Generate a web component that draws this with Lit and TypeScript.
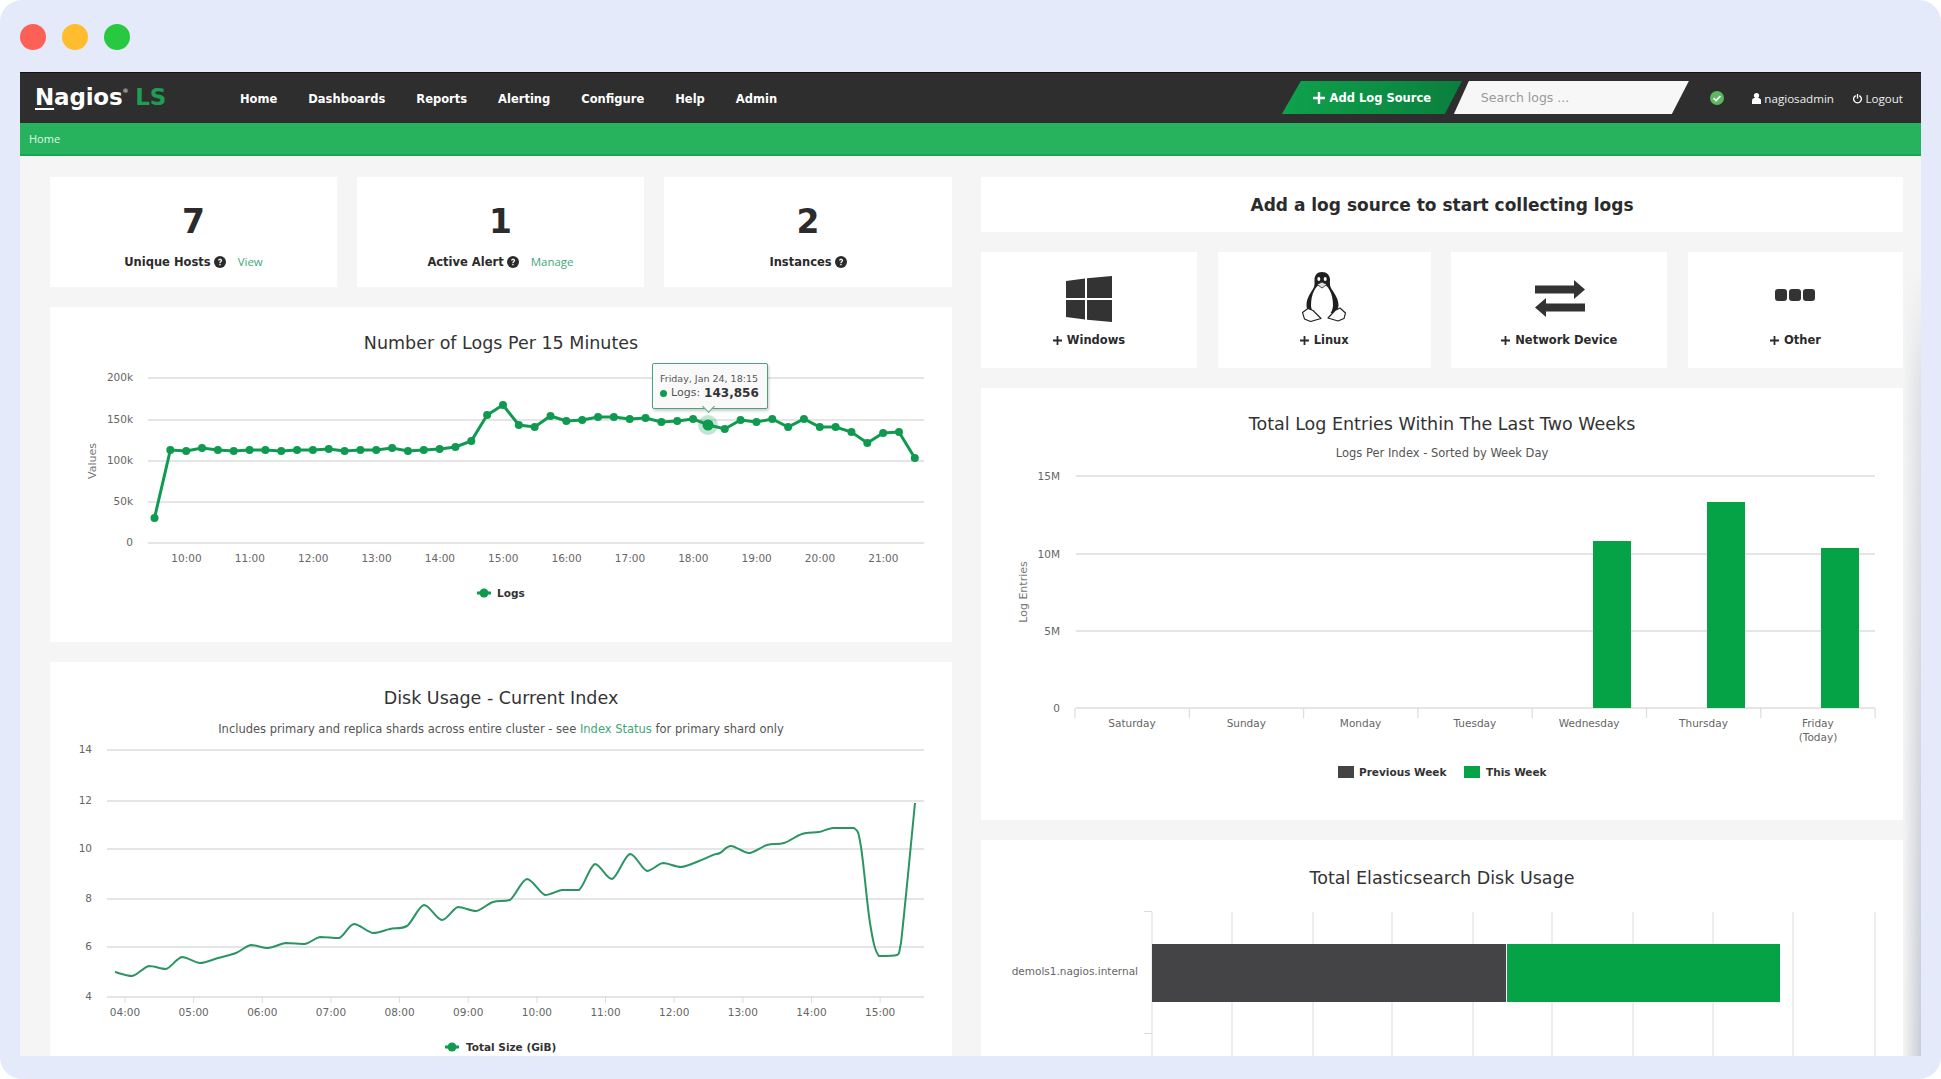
import { LitElement, html, css, svg } from "lit";
import { customElement } from "lit/decorators.js";

const GREEN = "#0f9a50";
const GRID = "#dcdcdc";

// y positions of the logs series, read off the reference at 15 minute steps from 09:30
const LOG_SERIES = [
  518, 450, 451, 448, 450, 451, 450, 450, 451, 450, 450, 449, 451, 450, 450, 448, 451, 450, 449, 447,
  441, 415, 405, 425, 427, 416, 421, 420, 417, 417, 419, 418, 422, 421, 419, 425, 429, 420, 422, 419,
  427, 419, 427, 427, 432, 443, 433, 432, 458,
];

// disk usage trace as [x, y] pairs in page pixels
const DISK_SERIES = [
  [115, 972], [132, 976], [149, 966], [166, 969], [182, 957], [200, 963], [218, 958], [236, 953],
  [251, 945], [268, 948], [286, 943], [305, 944], [320, 937], [339, 938], [354, 924], [373, 933],
  [390, 929], [407, 926], [424, 905], [442, 920], [458, 907], [476, 911], [493, 902], [510, 900],
  [527, 879], [545, 895], [562, 890], [579, 890], [595, 864], [612, 879], [630, 854], [647, 871],
  [663, 863], [681, 867], [699, 861], [713, 855], [720, 853], [731, 846], [749, 853], [767, 845],
  [784, 843], [802, 834], [819, 832], [833, 828], [854, 828], [861, 847], [870, 923], [879, 956],
  [897, 955], [901, 943], [915, 803],
];

function clamp(v: number, a: number, b: number) {
  return Math.min(Math.max(v, Math.min(a, b)), Math.max(a, b));
}

function smooth(points: number[][]) {
  let d = `M${points[0][0]} ${points[0][1]}`;
  for (let i = 0; i < points.length - 1; i++) {
    const p0 = points[Math.max(i - 1, 0)];
    const p1 = points[i];
    const p2 = points[i + 1];
    const p3 = points[Math.min(i + 2, points.length - 1)];
    const t = 0.16;
    const c1y = clamp(p1[1] + (p2[1] - p0[1]) * t, p1[1], p2[1]);
    const c2y = clamp(p2[1] - (p3[1] - p1[1]) * t, p1[1], p2[1]);
    d += ` C${p1[0] + (p2[0] - p0[0]) * t} ${c1y} ${p2[0] - (p3[0] - p1[0]) * t} ${c2y} ${p2[0]} ${p2[1]}`;
  }
  return d;
}

const questionIcon = html`<svg class="q" viewBox="0 0 12 12"><circle cx="6" cy="6" r="6" fill="#2b2b2b"/><path d="M4 4.6C4 3.4 5 2.8 6 2.8s2.1.6 2.1 1.8c0 1.5-1.6 1.4-1.6 2.6H5.3c0-1.7 1.5-1.7 1.5-2.6 0-.4-.3-.7-.8-.7s-.8.3-.8.7zM5.3 8h1.3v1.3H5.3z" fill="#fff"/></svg>`;

const plusIcon = html`<svg class="plus" viewBox="0 0 10 10"><path d="M4 0h2v4h4v2H6v4H4V6H0V4h4z" fill="currentColor"/></svg>`;

@customElement("app-root")
export class AppRoot extends LitElement {
  static styles = css`
    :host {
      display: block;
      width: 1941px;
      height: 1079px;
      background: #fff;
      font-family: "DejaVu Sans", sans-serif;
      color: #2b2b2b;
    }
    .frame {
      position: relative;
      height: 1079px;
      box-sizing: border-box;
      background: #e5eafb;
      border-radius: 22px;
      padding: 24px 20px;
    }
    .lights {
      display: flex;
      gap: 16px;
      height: 48px;
    }
    .lights i {
      width: 26px;
      height: 26px;
      border-radius: 50%;
    }
    .window {
      height: 984px;
      overflow: hidden;
      background: #f5f5f5;
    }
    .topbar {
      height: 51px;
      box-sizing: border-box;
      background: #2e2e2e;
      border-top: 1px solid #111;
      display: flex;
      align-items: center;
      padding: 0 18px 0 15px;
      color: #fff;
    }
    .logo {
      font-size: 23px;
      font-weight: 700;
      width: 205px;
      letter-spacing: -0.2px;
      margin-top: -2px;
    }
    .logo u {
      text-underline-offset: 3px;
    }
    .logo sup {
      font-size: 6px;
      font-weight: 400;
      vertical-align: 12px;
    }
    .logo span {
      color: #1f9d55;
      margin-left: 7px;
    }
    .nav {
      display: flex;
      gap: 31px;
      font-size: 11.5px;
      font-weight: 700;
      flex: 1;
      margin-top: 2px;
    }
    .add {
      width: 180px;
      height: 33px;
      display: flex;
      align-items: center;
      justify-content: center;
      gap: 5px;
      font-size: 11.5px;
      font-weight: 700;
      background: linear-gradient(to right, #0fa24c, #0a7f3e);
      clip-path: polygon(19px 0, 100% 0, 163px 100%, 0 100%);
      margin-top: -1px;
    }
    .add .plus {
      width: 12px;
      height: 12px;
    }
    .search {
      width: 235px;
      height: 33px;
      margin-left: -8px;
      box-sizing: border-box;
      padding-left: 27px;
      display: flex;
      align-items: center;
      background: #f7f7f7;
      color: #9a9a9a;
      font-size: 12.5px;
      clip-path: polygon(15px 0, 100% 0, 218px 100%, 0 100%);
      margin-top: -1px;
    }
    .status {
      margin-left: 21px;
      width: 14px;
      height: 14px;
    }
    .user {
      display: flex;
      align-items: center;
      gap: 3px;
      font-size: 11.6px;
      font-family: "Open Sans", sans-serif;
      color: #eee;
    }
    .user svg {
      width: 9px;
      height: 11px;
    }
    .user.name {
      margin-left: 28.5px;
    }
    .user.out {
      margin-left: 19.5px;
    }
    .crumb {
      height: 33px;
      box-sizing: border-box;
      background: #27b35d;
      border-bottom: 2px solid #1aa552;
      color: #e3f7ea;
      font-size: 11px;
      font-family: "Open Sans", sans-serif;
      display: flex;
      align-items: center;
      padding-left: 9px;
    }
    .content {
      display: grid;
      grid-template-columns: 902px 922px;
      column-gap: 29px;
      padding: 21px 18px 0 30px;
      align-items: start;
    }
    .col {
      display: flex;
      flex-direction: column;
    }
    .card {
      background: #fff;
      position: relative;
    }
    .stats {
      display: grid;
      grid-template-columns: 287px 287px 288px;
      column-gap: 20px;
      margin-bottom: 20px;
    }
    .stat {
      height: 110px;
      box-sizing: border-box;
      padding-top: 25px;
      text-align: center;
    }
    .stat b {
      display: block;
      font-size: 33px;
      line-height: 40px;
    }
    .stat .label {
      margin-top: 12px;
      font-size: 11.5px;
      font-weight: 700;
      line-height: 16px;
      display: flex;
      justify-content: center;
      align-items: center;
      gap: 3px;
    }
    .q {
      width: 12px;
      height: 12px;
    }
    .label a,
    .sub a {
      color: #3fa777;
      font-weight: 400;
      text-decoration: none;
    }
    .label a {
      margin-left: 9px;
      font-size: 11.5px;
      font-family: "Open Sans", sans-serif;
    }
    .chart {
      padding-top: 24px;
    }
    .chart h3 {
      margin: 0;
      font-size: 17.5px;
      font-weight: 400;
      line-height: 24px;
      text-align: center;
      color: #333;
    }
    .sub {
      text-align: center;
      font-size: 11.5px;
      line-height: 18px;
      color: #555;
    }
    .chart svg {
      display: block;
    }
    svg text {
      font-size: 10.5px;
      fill: #666;
    }
    svg text.ytitle {
      font-size: 11px;
      fill: #777;
    }
    svg text.legend {
      font-weight: 700;
      fill: #333;
    }
    .tooltip {
      position: absolute;
      left: 602px;
      top: 56px;
      width: 116px;
      height: 46px;
      box-sizing: border-box;
      background: #f9f9f9;
      border: 1.5px solid #4f9f7a;
      border-radius: 2px;
      box-shadow: 1px 2px 3px rgba(0, 0, 0, 0.2);
      padding: 8px 0 0 7px;
      font-size: 9.5px;
      line-height: 14px;
      color: #555;
    }
    .tooltip::after {
      content: "";
      position: absolute;
      left: 51px;
      top: 38px;
      width: 8px;
      height: 8px;
      background: #f9f9f9;
      border-right: 1.5px solid #4f9f7a;
      border-bottom: 1.5px solid #4f9f7a;
      transform: rotate(45deg);
    }
    .tooltip .row {
      display: flex;
      align-items: center;
      gap: 4px;
      font-size: 11px;
    }
    .tooltip .row i {
      width: 7px;
      height: 7px;
      border-radius: 50%;
      background: #0f9a50;
    }
    .tooltip .row b {
      font-size: 12px;
      color: #333;
    }
    .headline {
      height: 55px;
      margin-bottom: 20px;
      display: flex;
      align-items: center;
      justify-content: center;
      font-size: 17px;
      font-weight: 700;
    }
    .tiles {
      display: grid;
      grid-template-columns: 216px 213px 216px 215px;
      justify-content: space-between;
      margin-bottom: 20px;
    }
    .tile {
      height: 116px;
      box-sizing: border-box;
      display: flex;
      flex-direction: column;
      align-items: center;
    }
    .tile .ico {
      height: 93px;
      display: flex;
      align-items: center;
      justify-content: center;
    }
    .tile .name {
      display: flex;
      align-items: center;
      gap: 5px;
      font-size: 11.5px;
      font-weight: 700;
      line-height: 20px;
      margin-top: -15px;
    }
    .plus {
      width: 9px;
      height: 9px;
    }
    .gap {
      height: 20px;
      flex: none;
    }
    .sidefade {
      position: absolute;
      right: 20px;
      top: 270px;
      width: 18px;
      height: 786px;
      background: linear-gradient(to right, rgba(200, 205, 215, 0), rgba(190, 195, 208, 0.8));
      -webkit-mask-image: linear-gradient(to bottom, transparent, rgba(0, 0, 0, 0.5) 120px, #000);
      mask-image: linear-gradient(to bottom, transparent, rgba(0, 0, 0, 0.5) 120px, #000);
      pointer-events: none;
    }
  `;

  render() {
    return html`
      <div class="frame">
        <div class="lights">
          <i style="background:#fe5f57"></i>
          <i style="background:#febc2e"></i>
          <i style="background:#28c840"></i>
        </div>
        <div class="window">
          ${this.renderTopbar()}
          <div class="crumb">Home</div>
          <div class="content">
            <div class="col">
              ${this.renderStats()}
              <div class="card chart" style="height:335px;box-sizing:border-box">
                <h3>Number of Logs Per 15 Minutes</h3>
                ${this.renderLogsChart()}
                <div class="tooltip">
                  Friday, Jan 24, 18:15
                  <div class="row"><i></i>Logs: <b>143,856</b></div>
                </div>
              </div>
              <div class="gap"></div>
              <div class="card chart">
                <h3>Disk Usage - Current Index</h3>
                <div class="sub" style="margin-top:10px">
                  Includes primary and replica shards across entire cluster - see
                  <a>Index Status</a> for primary shard only
                </div>
                ${this.renderDiskChart()}
              </div>
            </div>
            <div class="col">
              <div class="card headline">Add a log source to start collecting logs</div>
              ${this.renderTiles()}
              <div class="card chart" style="height:432px;box-sizing:border-box">
                <h3>Total Log Entries Within The Last Two Weeks</h3>
                <div class="sub" style="margin-top:8px">Logs Per Index - Sorted by Week Day</div>
                ${this.renderWeekChart()}
              </div>
              <div class="gap"></div>
              <div class="card chart" style="padding-top:26px">
                <h3>Total Elasticsearch Disk Usage</h3>
                ${this.renderHostChart()}
              </div>
            </div>
          </div>
        </div>
        <div class="sidefade"></div>
      </div>
    `;
  }

  renderTopbar() {
    return html`
      <div class="topbar">
        <div class="logo"><u>N</u>agios<sup>®</sup><span>LS</span></div>
        <div class="nav">
          ${["Home", "Dashboards", "Reports", "Alerting", "Configure", "Help", "Admin"].map(
            (n) => html`<span>${n}</span>`
          )}
        </div>
        <div class="add">${plusIcon}Add Log Source</div>
        <div class="search">Search logs ...</div>
        <svg class="status" viewBox="0 0 14 14">
          <circle cx="7" cy="7" r="7" fill="#5cb85c" />
          <path d="M3.6 7.2l2.4 2.4 4.4-4.6" fill="none" stroke="#fff" stroke-width="1.8" />
        </svg>
        <div class="user name">
          <svg viewBox="0 0 9 11"><circle cx="4.5" cy="2.6" r="2.6" fill="#fff" /><path d="M0 11V7.5C0 6 1.2 5 2.6 5h3.8C7.8 5 9 6 9 7.500V11z" fill="#fff" /></svg>
          nagiosadmin
        </div>
        <div class="user out">
          <svg viewBox="0 0 10 11"><path d="M3 2.2a4.3 4.3 0 1 0 4 0M5 .5v5" fill="none" stroke="#fff" stroke-width="1.5" /></svg>
          Logout
        </div>
      </div>
    `;
  }

  renderStats() {
    return html`
      <div class="stats">
        <div class="card stat">
          <b>7</b>
          <div class="label">Unique Hosts ${questionIcon}<a>View</a></div>
        </div>
        <div class="card stat">
          <b>1</b>
          <div class="label">Active Alert ${questionIcon}<a>Manage</a></div>
        </div>
        <div class="card stat">
          <b>2</b>
          <div class="label">Instances ${questionIcon}</div>
        </div>
      </div>
    `;
  }

  renderTiles() {
    return html`
      <div class="tiles">
        <div class="card tile">
          <div class="ico">
            <svg width="46" height="46" viewBox="0 0 46 46">
              <path d="M0 5l19-2.500V22H0zM21 2.200L46 0v22H21zM0 24h19v19.500L0 41zM21 24h25v22l-25-2.200z" fill="#333" />
            </svg>
          </div>
          <div class="name">${plusIcon}Windows</div>
        </div>
        <div class="card tile">
          <div class="ico">
            <svg width="44" height="50" viewBox="0 0 44 50" style="margin-top:-4px">
              <path d="M20 0c-5 0-7.500 3.500-7.500 8 0 3 .5 5-1 8C9 20.500 4.500 26 4.500 33c0 3 1 6 3 8h25c2.500-2 4-5 4-8 0-7-5-12.500-7.500-17-1.500-3-1-5-1-8 0-4.500-3-8-8-8z" fill="#1f1f1f" />
              <path d="M20 12c-6 0-11 10-11 21 0 7 5 13 11 13s11-6 11-13c0-11-5-21-11-21z" fill="#fff" />
              <ellipse cx="16.800" cy="7" rx="1.500" ry="2" fill="#fff" />
              <ellipse cx="23.200" cy="7" rx="1.500" ry="2" fill="#fff" />
              <path d="M15 12.500l5-2.500 5 2.500-5 3.500z" fill="#ddd" stroke="#1f1f1f" stroke-width=".8" />
              <path d="M.5 40.500l5.500-4 5 2 8 8-10.500 3-6-2.500zM43.500 41l-5.500-5-5 2.500-7 7.500 10 3 6-2.500z" fill="#fff" stroke="#1f1f1f" stroke-width="1.100" stroke-linejoin="round" />
            </svg>
          </div>
          <div class="name">${plusIcon}Linux</div>
        </div>
        <div class="card tile">
          <div class="ico">
            <svg width="50" height="37" viewBox="0 0 50 37" style="margin-left:1px">
              <path d="M0 5.500h39V0l11 9.500L39 19v-5.500H0z" fill="#333" />
              <path d="M50 23.500H11V18L0 27.500 11 37v-5.500h39z" fill="#333" />
            </svg>
          </div>
          <div class="name">${plusIcon}Network Device</div>
        </div>
        <div class="card tile">
          <div class="ico">
            <svg width="40" height="12" viewBox="0 0 40 12" style="margin-top:-8px">
              <rect width="12" height="12" rx="3" fill="#333" />
              <rect x="14" width="12" height="12" rx="3" fill="#333" />
              <rect x="28" width="12" height="12" rx="3" fill="#333" />
            </svg>
          </div>
          <div class="name">${plusIcon}Other</div>
        </div>
      </div>
    `;
  }

  renderLogsChart() {
    const pts = LOG_SERIES.map((y, i) => [154.5 + i * 15.84, y]);
    const ys = [["200k", 378], ["150k", 420], ["100k", 461], ["50k", 502], ["0", 543]] as const;
    const hours = Array.from({ length: 12 }, (_, i) => i + 10);
    return html`<svg width="902" height="287" viewBox="50 355 902 287">
      ${ys.map(
        ([t, y]) => svg`
          <line x1="148" x2="924" y1=${y} y2=${y} stroke=${GRID} stroke-width="1.400" />
          <text x="133" y=${y + 3} text-anchor="end">${t}</text>
        `
      )}
      ${hours.map(
        (h, i) => svg`<text x=${186.5 + i * 63.35} y="562" text-anchor="middle">${h}:00</text>`
      )}
      <text class="ytitle" transform="translate(96 461) rotate(-90)" text-anchor="middle">Values</text>
      <polyline points=${pts.map((p) => p.join(",")).join(" ")} fill="none" stroke=${GREEN} stroke-width="3" />
      ${pts.map((p) => svg`<circle cx=${p[0]} cy=${p[1]} r="4" fill=${GREEN} />`)}
      <circle cx="708" cy="425" r="10" fill=${GREEN} opacity=".25" />
      <circle cx="708" cy="425" r="5.500" fill=${GREEN} />
      <line x1="477" x2="491" y1="593" y2="593" stroke=${GREEN} stroke-width="3" />
      <circle cx="484" cy="593" r="4.500" fill=${GREEN} />
      <text class="legend" x="497" y="597">Logs</text>
    </svg>`;
  }

  renderDiskChart() {
    const ys = [["14", 750], ["12", 801], ["10", 849], ["8", 899], ["6", 947], ["4", 997]] as const;
    const hours = Array.from({ length: 12 }, (_, i) => String(i + 4).padStart(2, "0"));
    return html`<svg width="902" height="330" viewBox="50 738 902 330">
      ${ys.map(
        ([t, y]) => svg`
          <line x1="107" x2="924" y1=${y} y2=${y} stroke=${GRID} stroke-width="1.400" />
          <text x="92" y=${y + 3} text-anchor="end">${t}</text>
        `
      )}
      ${hours.map(
        (h, i) => svg`
          <line x1=${125 + i * 68.65} x2=${125 + i * 68.65} y1="997" y2="1003" stroke=${GRID} />
          <text x=${125 + i * 68.65} y="1016" text-anchor="middle">${h}:00</text>
        `
      )}
      <path d=${smooth(DISK_SERIES)} fill="none" stroke="#2b9463" stroke-width="2" />
      <line x1="445" x2="459" y1="1047" y2="1047" stroke=${GREEN} stroke-width="3" />
      <circle cx="452" cy="1047" r="4.500" fill=${GREEN} />
      <text class="legend" x="466" y="1051">Total Size (GiB)</text>
    </svg>`;
  }

  renderWeekChart() {
    const ys = [["15M", 476], ["10M", 554], ["5M", 631], ["0", 708]] as const;
    const days = ["Saturday", "Sunday", "Monday", "Tuesday", "Wednesday", "Thursday", "Friday"];
    const bars = [[1593, 541], [1707, 502], [1821, 548]];
    return html`<svg width="922" height="358" viewBox="981 462 922 358">
      ${ys.map(
        ([t, y]) => svg`
          <line x1="1076" x2="1875" y1=${y} y2=${y} stroke=${GRID} stroke-width="1.400" />
          <text x="1060" y=${y + 4} text-anchor="end">${t}</text>
        `
      )}
      ${Array.from({ length: 8 }, (_, i) => i).map(
        (i) => svg`<line x1=${1075 + i * 114.3} x2=${1075 + i * 114.3} y1="708" y2="718" stroke=${GRID} stroke-width="1.200" />`
      )}
      ${days.map(
        (d, i) => svg`<text x=${1132 + i * 114.3} y="727" text-anchor="middle">${d}</text>`
      )}
      <text x="1818" y="741" text-anchor="middle">(Today)</text>
      <text class="ytitle" transform="translate(1027 592) rotate(-90)" text-anchor="middle">Log Entries</text>
      ${bars.map(([x, y]) => svg`<rect x=${x} y=${y} width="38" height=${708 - y} fill="#05a346" />`)}
      <rect x="1338" y="766" width="16" height="12" fill="#444" />
      <text class="legend" x="1359" y="776">Previous Week</text>
      <rect x="1464" y="766" width="16" height="12" fill="#05a346" />
      <text class="legend" x="1486" y="776">This Week</text>
    </svg>`;
  }

  renderHostChart() {
    const xs = [1152, 1232, 1313, 1392, 1473, 1552, 1633, 1713, 1793, 1875];
    return html`<svg width="922" height="190" viewBox="981 890 922 190">
      ${xs.map((x) => svg`<line x1=${x} x2=${x} y1="912" y2="1080" stroke=${GRID} />`)}
      <path d="M1144 911.500h8M1144 1033.500h8" stroke=${GRID} />
      <rect x="1152" y="944" width="354" height="58" fill="#444447" />
      <rect x="1507" y="944" width="273" height="58" fill="#05a346" />
      <text x="1138" y="975" text-anchor="end">demols1.nagios.internal</text>
    </svg>`;
  }
}
